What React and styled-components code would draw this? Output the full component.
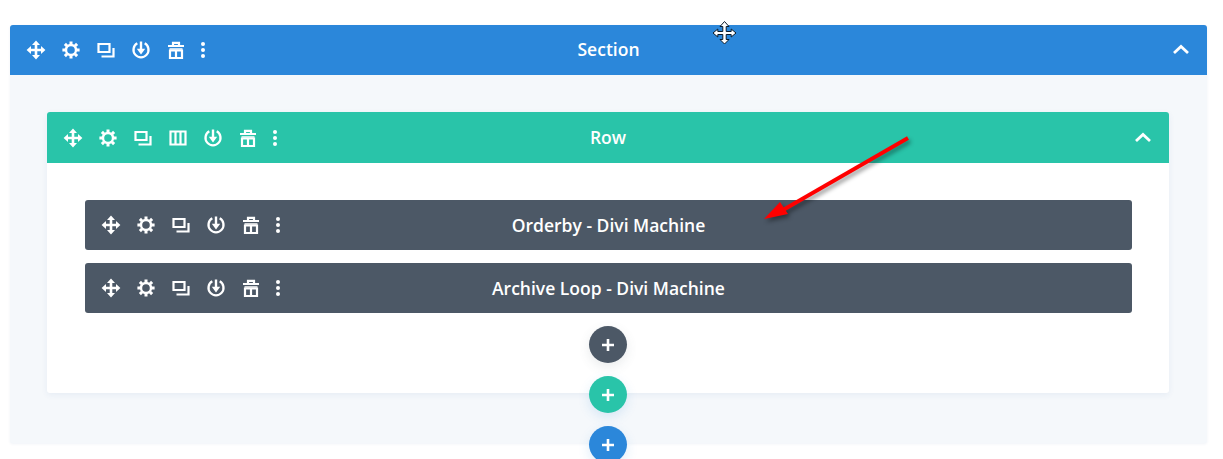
import React from "react";
import styled, { createGlobalStyle } from "styled-components";

const BLUE = "#2b87da";
const GREEN = "#29c4a9";
const SLATE = "#4c5866";

const GlobalStyle = createGlobalStyle`
  html, body {
    margin: 0;
    height: 459px;
    overflow: hidden;
    background: #fff;
    font-family: "Open Sans", "Liberation Sans", sans-serif;
  }
`;

const Page = styled.div`
  position: relative;
  width: 1223px;
  height: 459px;
  overflow: hidden;
  box-sizing: border-box;
  padding: 25px 16px 0 10px;
`;

const Section = styled.section`
  position: relative;
  background: #f5f8fb;
  border-radius: 3px;
  box-shadow: 0 1px 3px rgba(43, 87, 151, 0.07);
  padding-bottom: 50px;
`;

const Row = styled.div`
  position: relative;
  margin: 37px 38px 0 37px;
  background: #fff;
  border-radius: 3px;
  box-shadow: 0 2px 6px rgba(43, 87, 151, 0.07);
  padding-bottom: 30px;
`;

const Bar = styled.header`
  display: grid;
  grid-template-columns: 1fr auto 1fr;
  align-items: center;
  height: ${(p) => p.$height}px;
  background: ${(p) => p.$color};
  border-radius: 3px 3px 0 0;
  color: #fff;
`;

const Modules = styled.div`
  display: flex;
  flex-direction: column;
  gap: 13px;
  margin: 37px 37px 0 38px;
`;

const ModuleBar = styled(Bar)`
  border-radius: 3px;
`;

const Tools = styled.div`
  display: flex;
  align-items: center;
  padding-left: 8px;
`;

const Tool = styled.span`
  display: flex;
  justify-content: center;
  align-items: center;
  width: ${(p) => (p.$narrow ? 20 : 35)}px;
  height: 20px;
`;

const Title = styled.div`
  font-size: 17.5px;
  font-weight: 600;
  line-height: 22px;
  white-space: nowrap;
  margin-top: ${(p) => (p.$lift ? -2 : 0)}px;
`;

const Collapse = styled.div`
  display: flex;
  justify-content: flex-end;
  padding-right: 17px;
  margin-top: -2px;
`;

const AddButton = styled.button`
  display: flex;
  justify-content: center;
  align-items: center;
  width: 38px;
  height: 37px;
  padding: 0;
  border: 0;
  border-radius: 50%;
  background: ${(p) => p.$color};
  box-shadow: 0 4px 12px ${(p) => p.$glow};
`;

const AddRowSlot = styled.div`
  display: flex;
  justify-content: center;
  margin-top: 13px;
`;

const AddOverEdge = styled.div`
  position: absolute;
  left: 0;
  right: ${(p) => (p.$nudge ? 1 : 0)}px;
  bottom: -20px;
  display: flex;
  justify-content: center;
  z-index: 2;
`;

const ArrowOverlay = styled.svg`
  position: absolute;
  left: 750px;
  top: 125px;
  overflow: visible;
  z-index: 3;
  filter: drop-shadow(2px 3px 2px rgba(0, 0, 0, 0.4));
`;

const CursorOverlay = styled.svg`
  position: absolute;
  left: 713px;
  top: 21px;
  z-index: 4;
`;

const IconSvg = styled.svg`
  display: block;
  fill: none;
  stroke: #fff;
  stroke-width: 2;
`;

const Icon = ({ children }) => (
  <IconSvg width="20" height="20" viewBox="0 0 20 20">
    {children}
  </IconSvg>
);

const MoveIcon = () => (
  <Icon>
    <path strokeWidth="2.6" d="M10 3v14M3 10h14" />
    <path fill="#fff" stroke="none" d="M10 .6 14 5H6zM10 19.400 6 15h8zM.6 10 5 6v8zM19.400 10 15 14V6z" />
  </Icon>
);

const GearIcon = () => (
  <Icon>
    <circle cx="10" cy="10" r="5" strokeWidth="2.400" />
    <path
      strokeWidth="3"
      d="M10 1.400v3M10 15.600v3M1.400 10h3M15.600 10h3M3.900 3.900 6 6M14 14l2.100 2.100M16.100 3.900 14 6M6 14l-2.100 2.100"
    />
  </Icon>
);

const CopyIcon = () => (
  <Icon>
    <path strokeWidth="2.200" d="M2.500 4h11v8h-11z" />
    <path strokeWidth="2.200" d="M5.500 16.500H17.500V8" />
  </Icon>
);

const ColumnsIcon = () => (
  <Icon>
    <path strokeWidth="2.200" d="M2.500 3.500h15v13h-15zM7.500 3.500v13M12.500 3.500v13" />
  </Icon>
);

const SaveIcon = () => (
  <Icon>
    <path strokeWidth="2.300" d="M6.300 3.300a7.500 7.500 0 1 0 7.400 0" />
    <path strokeWidth="2.400" d="M10 1.500v9" />
    <path fill="#fff" stroke="none" d="M5.800 8.800h8.400L10 14.400z" />
  </Icon>
);

const TrashIcon = () => (
  <Icon>
    <path strokeWidth="2.200" d="M2 6h16M7 5.500V2.800h6v2.700" />
    <path strokeWidth="2.200" d="M4 10.500h12V18H4zM10 10.500V18" />
    <path strokeWidth="1.500" d="M3.500 9h13" />
  </Icon>
);

const DotsIcon = () => (
  <Icon>
    <g fill="#fff" stroke="none">
      <circle cx="10" cy="4" r="2" />
      <circle cx="10" cy="10" r="2" />
      <circle cx="10" cy="16" r="2" />
    </g>
  </Icon>
);

const ChevronIcon = () => (
  <IconSvg width="18" height="12" viewBox="0 0 18 12" style={{ strokeWidth: 2.8 }}>
    <path d="M2 10l7-6.500 7 6.500" />
  </IconSvg>
);

const PlusIcon = () => (
  <IconSvg width="14" height="14" viewBox="0 0 14 14" style={{ strokeWidth: 2.6 }}>
    <path d="M7 1v12M1 7h12" />
  </IconSvg>
);

const Toolbar = ({ columns }) => (
  <Tools>
    <Tool><MoveIcon /></Tool>
    <Tool><GearIcon /></Tool>
    <Tool><CopyIcon /></Tool>
    {columns && <Tool><ColumnsIcon /></Tool>}
    <Tool><SaveIcon /></Tool>
    <Tool><TrashIcon /></Tool>
    <Tool $narrow><DotsIcon /></Tool>
  </Tools>
);

const Module = ({ title }) => (
  <ModuleBar $height={50} $color={SLATE}>
    <Toolbar />
    <Title>{title}</Title>
    <span />
  </ModuleBar>
);

export default function App() {
  return (
    <Page>
      <GlobalStyle />
      <Section>
        <Bar $height={50} $color={BLUE}>
          <Toolbar />
          <Title $lift>Section</Title>
          <Collapse><ChevronIcon /></Collapse>
        </Bar>
        <Row>
          <Bar $height={51} $color={GREEN}>
            <Toolbar columns />
            <Title $lift>Row</Title>
            <Collapse><ChevronIcon /></Collapse>
          </Bar>
          <Modules>
            <Module title="Orderby - Divi Machine" />
            <Module title="Archive Loop - Divi Machine" />
          </Modules>
          <AddRowSlot>
            <AddButton $color={SLATE} $glow="rgba(76, 88, 102, 0.12)"><PlusIcon /></AddButton>
          </AddRowSlot>
          <AddOverEdge>
            <AddButton $color={GREEN} $glow="rgba(43, 135, 218, 0.15)"><PlusIcon /></AddButton>
          </AddOverEdge>
        </Row>
        <AddOverEdge $nudge>
          <AddButton $color={BLUE} $glow="rgba(43, 135, 218, 0.15)"><PlusIcon /></AddButton>
        </AddOverEdge>
      </Section>

      <ArrowOverlay width="170" height="100" viewBox="0 0 170 100">
        <path d="M158 13 33 85" stroke="#ff0000" strokeWidth="3.800" fill="none" />
        <path d="M14 94 30 77 38 89z" fill="#ff0000" />
      </ArrowOverlay>

      <CursorOverlay width="24" height="24" viewBox="0 0 24 24">
        <path
          fill="#fff"
          stroke="#0a1a2a"
          strokeWidth="1"
          d="M11.500.5 16 5.500h-2.800v5h5V8L23 12l-4.800 4v-2.500h-5v5H16L11.500 23 7 18.500h2.800v-5h-5V16L0 12l4.800-4v2.500h5v-5H7z"
        />
      </CursorOverlay>
    </Page>
  );
}
